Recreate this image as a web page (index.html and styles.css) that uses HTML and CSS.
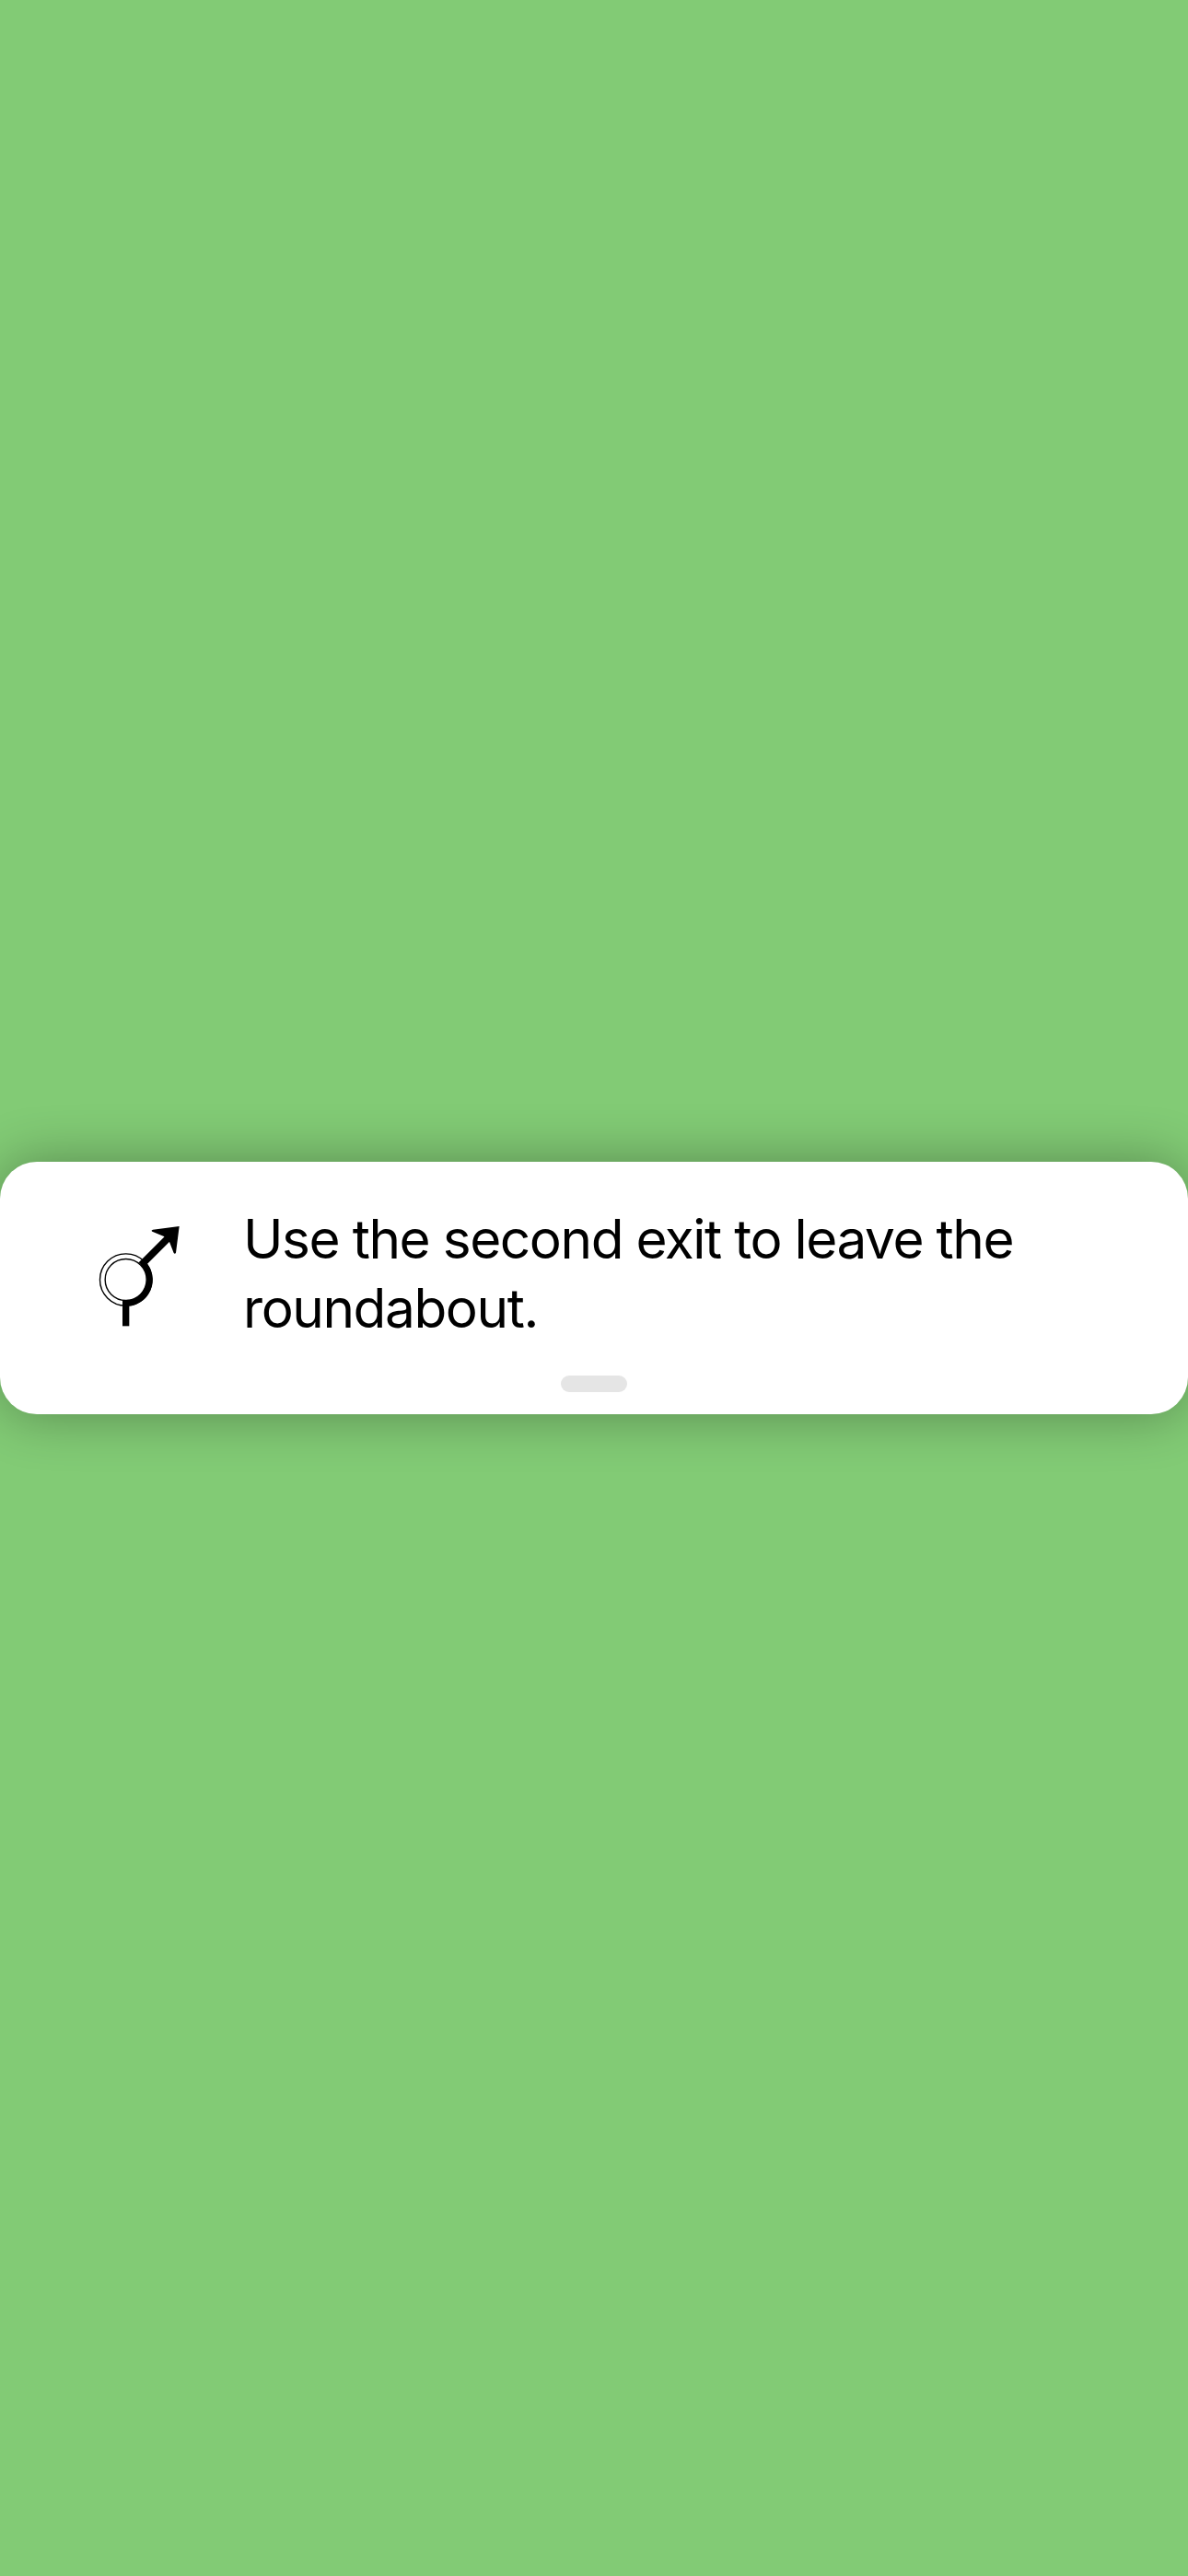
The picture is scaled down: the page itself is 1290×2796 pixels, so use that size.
FILE: index.html
```html
<!DOCTYPE html>
<html lang="en">
<head>
<meta charset="utf-8">
<title>Navigation</title>
<link rel="stylesheet" href="styles.css">
</head>
<body>
<main class="screen">
  <section class="card">
    <div class="instruction">
      <svg class="maneuver" viewBox="0 0 390 450" aria-hidden="true">
        <g fill="none" stroke="#000">
          <circle cx="140" cy="237" r="84.5" stroke-width="4.2"/>
          <circle cx="140" cy="237" r="67.5" stroke-width="4.2"/>
          <path d="M195 183A76 76 0 0 1 140 313" stroke-width="20"/>
          <path d="M140 303V388" stroke-width="22"/>
          <path d="M190 189L280 99" stroke-width="23"/>
        </g>
        <path d="M314 63L228 74Q221 76 226 80L264 96L282 114L296 150Q300 155 303 149Z"/>
      </svg>
      <p class="text">Use the second exit to leave the roundabout.</p>
    </div>
    <div class="handle"></div>
  </section>
</main>
</body>
</html>
```
FILE: styles.css
```css
body {
  margin: 0;
  background: #82cb75;
}

.screen {
  height: 2796px;
  display: flex;
  flex-direction: column;
  justify-content: center;
  overflow: hidden;
}

.card {
  box-sizing: border-box;
  height: 274px;
  padding: 46px 90px 24px;
  display: flex;
  flex-direction: column;
  justify-content: space-between;
  align-items: center;
  background: #fff;
  border-radius: 40px;
  box-shadow: 0 0 60px rgba(0, 0, 0, 0.33);
}

.instruction {
  width: 100%;
  display: flex;
  gap: 44px;
}

.maneuver {
  width: 130px;
  height: 150px;
  margin-top: 3px;
  flex: none;
}

.text {
  margin: 0;
  width: 900px;
  font-family: Inter, sans-serif;
  font-size: 58.5px;
  line-height: 75px;
  letter-spacing: -1.42px;
  word-spacing: -0.6px;
  color: #000;
}

.handle {
  width: 72px;
  height: 18px;
  border-radius: 9px;
  background: #e5e5e5;
}
```
